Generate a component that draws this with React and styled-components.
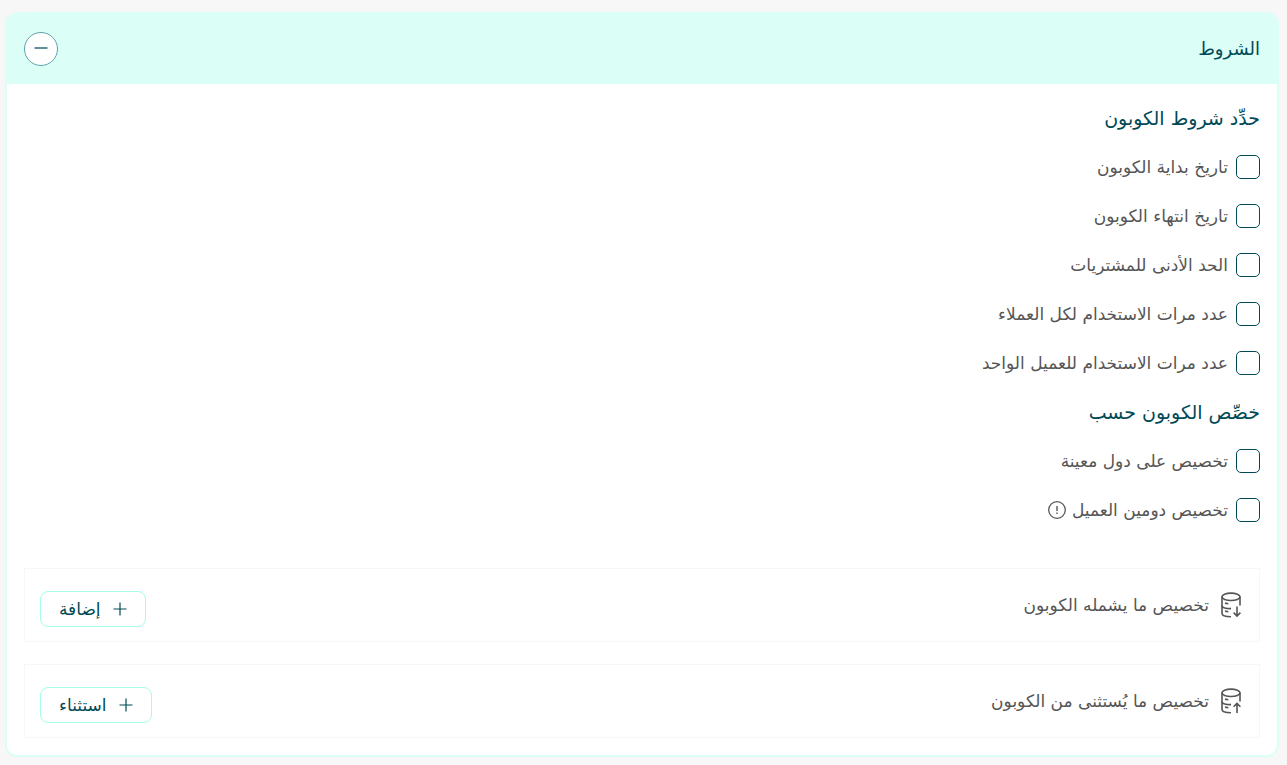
import React, { useState } from "react";
import styled, { createGlobalStyle } from "styled-components";

const GlobalStyle = createGlobalStyle`
  * {
    box-sizing: border-box;
  }
  body {
    margin: 0;
    background: #f7f7f7;
    font-family: "DejaVu Sans", sans-serif;
  }
`;

const termOptions = [
  { id: "start-date", label: "تاريخ بداية الكوبون" },
  { id: "end-date", label: "تاريخ انتهاء الكوبون" },
  { id: "min-purchase", label: "الحد الأدنى للمشتريات" },
  { id: "uses-total", label: "عدد مرات الاستخدام لكل العملاء" },
  { id: "uses-customer", label: "عدد مرات الاستخدام للعميل الواحد" },
];

const targetOptions = [
  { id: "countries", label: "تخصيص على دول معينة" },
  { id: "domain", label: "تخصيص دومين العميل", info: true },
];

const PlusIcon = () => (
  <svg width="14" height="14" viewBox="0 0 14 14" stroke="currentColor" aria-hidden="true">
    <path d="M7 0.5v13M0.5 7h13" fill="none" strokeWidth="1.2" />
  </svg>
);

const InfoIcon = () => (
  <svg width="18" height="18" viewBox="0 0 18 18" fill="none" stroke="currentColor" aria-hidden="true">
    <circle cx="9" cy="9" r="8.3" strokeWidth="1.3" />
    <path d="M9 5v5" strokeWidth="1.4" />
    <path d="M9 11.6v1.4" strokeWidth="1.4" />
  </svg>
);

// database cylinder, arrow points down (include) or up (exclude)
const DatabaseIcon = ({ up }) => (
  <svg width="20" height="26" viewBox="0 0 20 26" fill="none" stroke="currentColor" strokeWidth="1.6" aria-hidden="true">
    <ellipse cx="10" cy="4.8" rx="9" ry="3.7" />
    <path d="M1 4.8v16.6c0 1.8 3.6 3.2 9 3.3" />
    <path d="M19 4.8v8.6" />
    <path d="M1 13.4c0 1.8 3.6 3.1 9 3.2" />
    <path d="M4 11.1l3.4 .7M4 19.1l3.4 .7" />
    {up ? (
      <path d="M16 25v-9.4M12.6 18.8l3.4-3.4 3.4 3.4" />
    ) : (
      <path d="M16 14.4v9.4M12.6 20.6l3.4 3.4 3.4-3.4" />
    )}
  </svg>
);

function OptionRow({ option }) {
  const [checked, setChecked] = useState(false);
  return (
    <Row>
      <Checkbox
        type="checkbox"
        id={option.id}
        checked={checked}
        onChange={(e) => setChecked(e.target.checked)}
      />
      <OptionLabel htmlFor={option.id}>
        {option.label}
        {option.info && <InfoIcon />}
      </OptionLabel>
    </Row>
  );
}

function App() {
  const [open, setOpen] = useState(true);
  return (
    <Page dir="rtl" lang="ar">
      <GlobalStyle />
      <Card>
        <Header>
          <Title>الشروط</Title>
          <ToggleButton aria-label="الشروط" aria-expanded={open} onClick={() => setOpen(!open)}>
            <svg width="14" height="14" viewBox="0 0 14 14" aria-hidden="true">
              <path d={open ? "M0.5 6h13" : "M0.5 7h13M7 0.5v13"} stroke="currentColor" strokeWidth="2" />
            </svg>
          </ToggleButton>
        </Header>
        {open && (
          <Body>
            <SectionTitle>حدِّد شروط الكوبون</SectionTitle>
            {termOptions.map((option) => (
              <OptionRow key={option.id} option={option} />
            ))}
            <SectionTitle>خصِّص الكوبون حسب</SectionTitle>
            {targetOptions.map((option) => (
              <OptionRow key={option.id} option={option} />
            ))}
            <Rules>
              <Rule>
                <RuleName>
                  <DatabaseIcon />
                  <span>تخصيص ما يشمله الكوبون</span>
                </RuleName>
                <RuleButton>
                  <PlusIcon />
                  إضافة
                </RuleButton>
              </Rule>
              <Rule>
                <RuleName>
                  <DatabaseIcon up />
                  <span>تخصيص ما يُستثنى من الكوبون</span>
                </RuleName>
                <RuleButton>
                  <PlusIcon />
                  استثناء
                </RuleButton>
              </Rule>
            </Rules>
          </Body>
        )}
      </Card>
    </Page>
  );
}

export default App;

const Page = styled.main`
  padding: 12px 8px 8px 5px;
`;
const Card = styled.section`
  border: 2px solid #dbfff7;
  border-radius: 12px;
  background: white;
  overflow: hidden;
`;
const Header = styled.header`
  display: flex;
  align-items: center;
  justify-content: space-between;
  padding: 18px 17px;
  background: #dbfff7;
`;
const Title = styled.h2`
  margin: 0;
  font-size: 18px;
  font-weight: 400;
  line-height: 28px;
  color: #004956;
`;
const ToggleButton = styled.button`
  display: flex;
  align-items: center;
  justify-content: center;
  width: 34px;
  height: 34px;
  padding: 0;
  border: 1px solid #5fa3ad;
  border-radius: 50%;
  background: white;
  color: #5f9299;
  cursor: pointer;
`;
const Body = styled.div`
  padding: 9px 17px 17px;
`;
const SectionTitle = styled.h3`
  display: flex;
  align-items: center;
  height: 49px;
  margin: 0;
  font-size: 19px;
  font-weight: 400;
  color: #004956;
`;
const Row = styled.div`
  display: flex;
  align-items: center;
  gap: 8px;
  height: 49px;
  font-size: 17px;
  color: #555;
`;
const OptionLabel = styled.label`
  display: flex;
  align-items: center;
  gap: 6px;
  cursor: pointer;
`;
const Checkbox = styled.input`
  appearance: none;
  width: 24px;
  height: 24px;
  margin: 0;
  border: 1px solid #004956;
  border-radius: 5px;
  background: white;
  cursor: pointer;
  &:checked {
    background: #004956;
  }
`;
const Rules = styled.div`
  display: flex;
  flex-direction: column;
  gap: 22px;
  padding-top: 34px;
`;
const Rule = styled.div`
  display: flex;
  align-items: center;
  justify-content: space-between;
  height: 74px;
  padding: 0 18px 0 15px;
  border: 1px solid #f7f7f7;
`;
const RuleName = styled.div`
  display: flex;
  align-items: center;
  gap: 12px;
  font-size: 17px;
  color: #555;
`;
const RuleButton = styled.button`
  display: flex;
  align-items: center;
  gap: 12px;
  height: 36px;
  margin-top: 8px;
  padding: 0 18px;
  border: 1px solid #a6fde8;
  border-radius: 8px;
  background: white;
  color: #004956;
  font-family: inherit;
  font-size: 17px;
  cursor: pointer;
`;
